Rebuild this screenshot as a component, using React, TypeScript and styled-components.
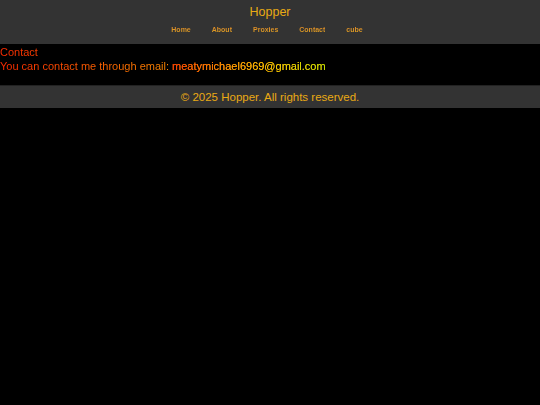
import React from "react";
import styled, { createGlobalStyle } from "styled-components";

const GlobalStyle = createGlobalStyle`
  html, body {
    margin: 0;
    padding: 0;
    background: #000;
    font-family: "Comic Sans MS", "Liberation Sans", sans-serif;
  }
`;

const Header = styled.header`
  background: #333333;
  height: 44px;
  display: flex;
  flex-direction: column;
  align-items: center;
  padding-top: 4px;
  box-sizing: border-box;
`;

const Title = styled.div`
  color: #eaaa14;
  font-size: 12.5px;
  line-height: 16px;
`;

const Nav = styled.nav`
  display: flex;
  gap: 21px;
  margin-top: 5px;
  padding-right: 6px;
`;

const NavLink = styled.a`
  font-size: 7px;
  font-weight: bold;
  line-height: 10px;
  text-decoration: none;
  background: linear-gradient(180deg, #e88a2a, #d8a420);
  -webkit-background-clip: text;
  background-clip: text;
  color: transparent;
`;

const Main = styled.main`
  padding: 1px 0 0;
  height: 40px;
`;

const GradientText = styled.div`
  background: linear-gradient(90deg, #ff2a00 0%, #ff8a00 32%, #ffcc00 70%, #d0e000 100%);
  -webkit-background-clip: text;
  background-clip: text;
  color: transparent;
  font-size: 11px;
  line-height: 14px;
`;

const Email = styled.a`
  background: linear-gradient(90deg, #ff3000 0%, #ff9000 35%, #f0d000 70%, #b8e000 100%);
  -webkit-background-clip: text;
  background-clip: text;
  color: transparent;
  text-decoration: none;
`;

const Footer = styled.footer`
  background: #333333;
  border-top: 1px solid #222;
  height: 22px;
  display: flex;
  align-items: center;
  justify-content: center;
  color: #eaaa14;
  font-size: 11.5px;
`;

const navItems = ["Home", "About", "Proxies", "Contact", "cube"];

export default function App() {
  return (
    <>
      <GlobalStyle />
      <Header>
        <Title>Hopper</Title>
        <Nav>
          {navItems.map((n) => (
            <NavLink key={n} href="#">
              {n}
            </NavLink>
          ))}
        </Nav>
      </Header>
      <Main>
        <GradientText>Contact</GradientText>
        <GradientText>
          You can contact me through email: <Email href="#">meatymichael6969@gmail.com</Email>
        </GradientText>
      </Main>
      <Footer>© 2025 Hopper. All rights reserved.</Footer>
    </>
  );
}
